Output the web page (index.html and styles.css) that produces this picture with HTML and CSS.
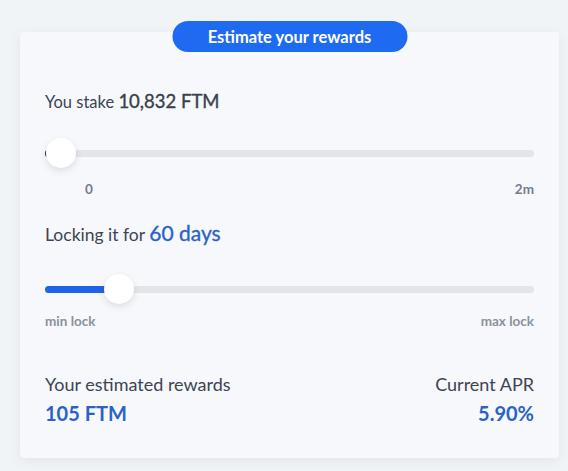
FILE: index.html
```html
<!DOCTYPE html>
<html>
<head>
<meta charset="utf-8">
<link rel="stylesheet" href="styles.css">
</head>
<body>
<div class="card">
  <button class="title-btn">Estimate your rewards</button>
  <div class="line stake">You stake <span class="big">10,832 FTM</span></div>
  <div class="slider slider1">
    <div class="track"></div>
    <div class="fill" style="width: 6px"></div>
    <div class="thumb" style="left: 1px"></div>
  </div>
  <div class="ticks">
    <span class="tick-min">0</span>
    <span>2m</span>
  </div>
  <div class="line lock">Locking it for <span class="big blue">60 days</span></div>
  <div class="slider slider2">
    <div class="track"></div>
    <div class="fill" style="width: 66px"></div>
    <div class="thumb" style="left: 59px"></div>
  </div>
  <div class="ticks ticks2">
    <span>min lock</span>
    <span>max lock</span>
  </div>
  <div class="results">
    <div class="col">
      <div class="res-label">Your estimated rewards</div>
      <div class="res-value">105 FTM</div>
    </div>
    <div class="col right">
      <div class="res-label">Current APR</div>
      <div class="res-value">5.90%</div>
    </div>
  </div>
</div>
</body>
</html>
```
FILE: styles.css
```css
html, body {
  margin: 0;
  padding: 0;
  background: #f1f4f7;
  font-family: "Lato", "Liberation Sans", sans-serif;
  color: #3d4453;
}
body {
  width: 568px;
  height: 471px;
  overflow: hidden;
  padding-top: 32px;
  box-sizing: border-box;
}
.card {
  position: relative;
  margin-left: 20px;
  width: 539px;
  height: 426px;
  box-sizing: border-box;
  padding: 57px 25px 0 25px;
  background: #f6f8fb;
  border-radius: 4px;
  box-shadow: 0 3px 12px rgba(40, 60, 90, 0.08);
}
.title-btn {
  position: absolute;
  top: -11px;
  left: 50%;
  transform: translateX(-50%);
  width: 235px;
  height: 31px;
  border: none;
  border-radius: 16px;
  background: #1e6bf1;
  color: #fff;
  font-family: "Lato", "Liberation Sans", sans-serif;
  font-weight: 700;
  font-size: 16.5px;
  padding: 0;
  cursor: pointer;
}
.line {
  font-size: 16.5px;
  line-height: 24px;
  height: 24px;
  white-space: nowrap;
}
.big {
  font-size: 18.5px;
  font-weight: 400;
  -webkit-text-stroke: 0.35px currentColor;
  color: #3a404d;
}
.lock {
  margin-top: 24px;
  font-size: 17.5px;
}
.lock .big {
  font-size: 21px;
}
.big.blue {
  color: #2c62c6;
}
.slider {
  position: relative;
  height: 30px;
  margin-top: 25px;
}
.slider2 {
  margin-top: 29px;
}
.track {
  position: absolute;
  left: 0;
  right: 0;
  top: 12px;
  height: 7px;
  border-radius: 4px;
  background: #e3e6e9;
}
.fill {
  position: absolute;
  left: 0;
  top: 12px;
  height: 7px;
  border-radius: 4px;
  background: #1f63e6;
}
.slider1 .fill {
  background: #2d3a50;
}
.thumb {
  position: absolute;
  top: 0;
  width: 30px;
  height: 30px;
  border-radius: 50%;
  background: #ffffff;
  box-shadow: 0 3px 7px rgba(30, 40, 60, 0.12);
}
.ticks {
  display: flex;
  justify-content: space-between;
  margin-top: 13px;
  font-size: 13.5px;
  line-height: 16px;
  font-weight: 700;
  color: #737c8f;
}
.tick-min {
  padding-left: 40px;
}
.ticks2 {
  margin-top: 9px;
  color: #8b919c;
}
.results {
  display: flex;
  justify-content: space-between;
  margin-top: 44px;
}
.col.right {
  text-align: right;
}
.res-label {
  font-size: 18px;
  line-height: 22px;
  color: #3d4453;
}
.res-value {
  margin-top: 6px;
  font-size: 20px;
  line-height: 24px;
  font-weight: 700;
  color: #2c62c6;
}
```
